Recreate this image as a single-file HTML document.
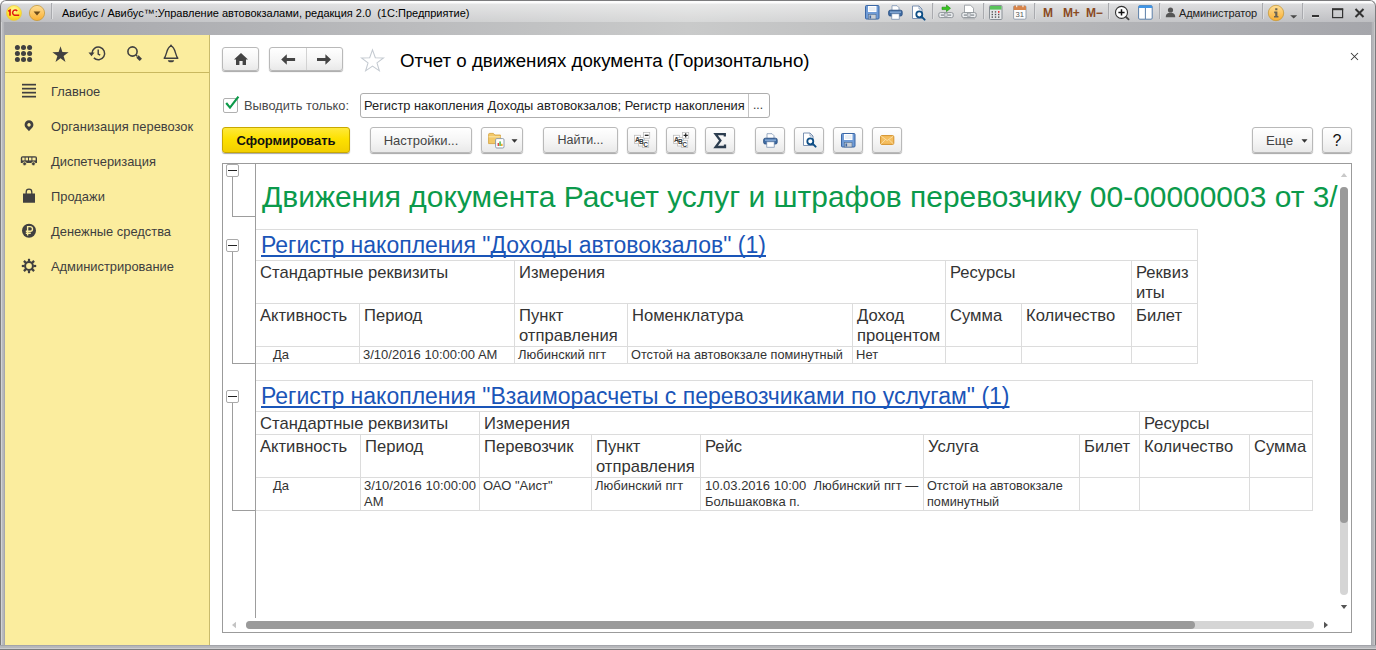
<!DOCTYPE html>
<html><head><meta charset="utf-8">
<style>
*{box-sizing:border-box;margin:0;padding:0}
html,body{width:1376px;height:650px;overflow:hidden;background:#fff;font-family:"Liberation Sans",sans-serif;}
.abs{position:absolute}
#win{position:absolute;left:0;top:0;width:1376px;height:650px;background:#a8a9ae;overflow:hidden;border-radius:6px 6px 0 0}
#fl{position:absolute;left:0;top:22px;width:5px;height:628px;background:linear-gradient(90deg,#7c7c7e 0,#7c7c7e 1px,#d2d2d4 1px,#d2d2d4 2px,#bcbdc0 2px,#b3b4b8 4px,#a6a7ad 4px)}
#fr{position:absolute;left:1371px;top:22px;width:5px;height:628px;background:linear-gradient(90deg,#a8a9ae 0,#a8a9ae 1px,#b3b4b8 1px,#b6b7ba 3px,#c8c8ca 3px,#c8c8ca 4px,#7a7a7c 4px)}
#fb{position:absolute;left:0;top:645px;width:1376px;height:5px;background:linear-gradient(#a3a4aa 0,#a3a4aa 1px,#b5b6ba 1px,#b8b9bc 3px,#cdcdcf 3px,#cdcdcf 4px,#7c7c7e 4px)}
#ft{position:absolute;left:0;top:0;width:1376px;height:35px;border:1px solid #7c7c7e;border-bottom:0;border-radius:6px 6px 0 0;pointer-events:none}
#tb1{position:absolute;left:0;top:0;width:1376px;height:22px;background:linear-gradient(180deg,rgba(255,255,255,.97) 0,rgba(255,255,255,.97) 3px,rgba(255,255,255,.58) 4px,rgba(255,255,255,.27) 22px),linear-gradient(90deg,#a5a6ab 0,#c9caca 50%,#a5a6ab 100%)}
#tb2{position:absolute;left:0;top:22px;width:1376px;height:13px;background:linear-gradient(90deg,#a5a6ab 0,#c9caca 50%,#a5a6ab 100%)}
#title{position:absolute;left:62px;top:7px;font-size:11px;color:#000;white-space:pre}
#side{position:absolute;left:5px;top:35px;width:205px;height:610px;background:#fbed9e;border-right:1px solid #c9bb6c}
#sidetop{position:absolute;left:0;top:0;width:204px;height:38px;border-bottom:1px solid #c9b85f}
.mi{position:absolute;left:46px;font-size:12.9px;color:#3e3e3e;white-space:nowrap}
#main{position:absolute;left:210px;top:35px;width:1161px;height:610px;background:#fff}
.btn{position:absolute;height:24px;border:1px solid #b9b9b9;border-radius:3px;background:linear-gradient(#fff,#f4f4f4 60%,#e9e9e9);box-shadow:0 1px 1px rgba(0,0,0,.35);font-size:14px;color:#444;text-align:center;line-height:22px;white-space:nowrap}
#ptitle{position:absolute;left:400px;top:50px;font-size:18.7px;color:#000;white-space:nowrap}
#sheet{position:absolute;left:222px;top:163px;width:1130px;height:470px;border:1px solid #9b9b9b;background:#fff;overflow:hidden}
.tsep{position:absolute;top:3px;width:2px;height:16px;background:linear-gradient(90deg,#a9aaae 50%,#dedfe1 50%)}
.mm{top:6px;font-size:12px;font-weight:bold;color:#8a4a1f;white-space:nowrap;letter-spacing:-0.3px}
.b2{top:127px;height:26px;font-size:13px;line-height:25.500px}
.t{position:absolute;white-space:nowrap;color:#333}
.h{font-size:16.600px;line-height:20px}
.big{font-size:29.940px;line-height:36px;color:#0b9a4b}
.reg{font-size:23px;line-height:28px;color:#1a55b8;text-decoration:underline;text-decoration-thickness:2px;text-underline-offset:2px;text-decoration-skip-ink:none}
.cb{position:absolute;width:13px;height:13px;border:1px solid #aaa;border-radius:2px;background:#fff}
.cb i{position:absolute;left:1px;top:5px;width:9px;height:1px;background:#222}
.d{font-size:13px;line-height:16px}
.vl{position:absolute;width:1px;background:#dcdcdc}
.hl{position:absolute;height:1px;background:#dcdcdc}
</style></head><body>
<div id="win">
<div id="tb1"></div><div id="tb2"></div><div id="fl"></div><div id="fr"></div><div id="fb"></div><div id="ft"></div>
<div id="title">Авибус / Авибус™:Управление автовокзалами, редакция 2.0  (1С:Предприятие)</div>
<!--TITLEBAR ICONS-->
<svg class="abs" style="left:5px;top:4px" width="50" height="20" viewBox="0 0 50 20">
 <defs>
  <radialGradient id="g1c" cx="0.5" cy="0.3" r="0.7"><stop offset="0" stop-color="#fff9a8"/><stop offset="0.6" stop-color="#ffe534"/><stop offset="1" stop-color="#f4c91c"/></radialGradient>
  <linearGradient id="gor" x1="0" y1="0" x2="0" y2="1"><stop offset="0" stop-color="#ffdf96"/><stop offset="1" stop-color="#f9ae32"/></linearGradient>
 </defs>
 <circle cx="9" cy="9" r="7.6" fill="url(#g1c)" stroke="#e8c84a" stroke-width="0.6"/>
 <path d="M3.3 7.3 L5 6.2 V11.8" fill="none" stroke="#e01b12" stroke-width="1.7"/><path d="M12.2 7 A2.6 2.6 0 1 0 9.6 11.2 H14.2" fill="none" stroke="#e01b12" stroke-width="1.5"/><path d="M9.6 9.2 H12.4" fill="none" stroke="#e01b12" stroke-width="0"/>
 <circle cx="32" cy="9" r="7.6" fill="url(#gor)" stroke="#c79a3c" stroke-width="0.8"/>
 <path d="M28.6 7.6 L35.4 7.6 L32 11.4Z" fill="#6b4a1a"/>
</svg>
<div class="tsep" style="left:51px"></div>
<!-- save -->
<svg class="abs" style="left:865px;top:5px" width="15" height="15" viewBox="0 0 15 15"><rect x="0.5" y="0.5" width="13.5" height="13.5" rx="1" fill="#6f9bd6" stroke="#3b67a5"/><rect x="3" y="1" width="8.5" height="6" fill="#ffffff"/><path d="M4 3h6.5M4 5h6.5" stroke="#b9c9de" stroke-width="0.6"/><rect x="3.5" y="9.5" width="7.5" height="4.5" fill="#c9cfd6" stroke="#54708f" stroke-width="0.6"/><rect x="4.5" y="10.5" width="1.6" height="3" fill="#3b67a5"/></svg>
<!-- print -->
<svg class="abs" style="left:888px;top:5px" width="15" height="15" viewBox="0 0 15 15"><path d="M4 0.7h5l2 2v3h-7z" fill="#fff" stroke="#6d87aa" stroke-width="0.7"/><rect x="0.6" y="5.2" width="13.6" height="5.8" rx="1.6" fill="#3f6ca3" stroke="#2b4f82" stroke-width="0.8"/><rect x="2" y="6.5" width="11" height="1.3" fill="#8fb1db"/><rect x="3.8" y="8.8" width="7.4" height="5.4" fill="#fff" stroke="#6d87aa" stroke-width="0.7"/></svg>
<!-- preview -->
<svg class="abs" style="left:911px;top:5px" width="16" height="16" viewBox="0 0 16 16"><path d="M1.5 1h6.5l3 3v9.5h-9.5z" fill="#fff" stroke="#6d87aa" stroke-width="0.9"/><path d="M8 1v3h3" fill="none" stroke="#6d87aa" stroke-width="0.7"/><circle cx="8.3" cy="9.3" r="3" fill="#fff" stroke="#0f4f86" stroke-width="1.8"/><path d="M10.6 11.6l3 3" stroke="#0f4f86" stroke-width="2" stroke-linecap="round"/></svg>
<div class="tsep" style="left:932px"></div>
<!-- link arrow -->
<svg class="abs" style="left:938px;top:4px" width="16" height="16" viewBox="0 0 16 16"><path d="M4 3.2h4.5V1l4 3.3-4 3.3V5.6H4z" fill="#35c81e" stroke="#1f8a10" stroke-width="0.6"/><rect x="0.8" y="8.6" width="14.4" height="5" rx="1.6" fill="#eef0f2" stroke="#8f9499" stroke-width="1"/><rect x="2.8" y="10.3" width="3.6" height="1.6" fill="#9aa0a6"/><rect x="9.6" y="10.3" width="3.6" height="1.6" fill="#9aa0a6"/><rect x="6.4" y="9.6" width="3.2" height="3" fill="#cfd3d7" stroke="#8f9499" stroke-width="0.5"/></svg>
<!-- link doc -->
<svg class="abs" style="left:961px;top:4px" width="16" height="16" viewBox="0 0 16 16"><path d="M3.5 1.2h6l3 3V9h-9z" fill="#fff" stroke="#8f9499" stroke-width="0.8"/><rect x="0.8" y="8.6" width="14.4" height="5" rx="1.6" fill="#eef0f2" stroke="#8f9499" stroke-width="1"/><rect x="2.8" y="10.3" width="3.6" height="1.6" fill="#9aa0a6"/><rect x="9.6" y="10.3" width="3.6" height="1.6" fill="#9aa0a6"/><rect x="6.4" y="9.6" width="3.2" height="3" fill="#cfd3d7" stroke="#8f9499" stroke-width="0.5"/><path d="M2 14.8h12" stroke="#a7abaf" stroke-width="0.8"/></svg>
<div class="tsep" style="left:983px"></div>
<!-- calc -->
<svg class="abs" style="left:989px;top:5px" width="14" height="15" viewBox="0 0 14 15"><rect x="0.5" y="0.5" width="12.5" height="14" rx="1" fill="#e6e8ea" stroke="#8a9096"/><rect x="1" y="1" width="11.5" height="3.6" fill="#59c35a"/><g fill="#555"><rect x="2.6" y="6.2" width="1.4" height="1.4"/><rect x="5.8" y="6.2" width="1.4" height="1.4"/><rect x="2.6" y="8.8" width="1.4" height="1.4"/><rect x="5.8" y="8.8" width="1.4" height="1.4"/><rect x="9" y="8.8" width="1.4" height="1.4"/><rect x="2.6" y="11.4" width="1.4" height="1.4"/><rect x="5.8" y="11.4" width="1.4" height="1.4"/><rect x="9" y="11.4" width="1.4" height="1.4"/></g><rect x="9" y="6" width="1.5" height="1.8" fill="#e33"/></svg>
<!-- calendar -->
<svg class="abs" style="left:1013px;top:4px" width="14" height="16" viewBox="0 0 14 16"><rect x="0.6" y="1.8" width="12.4" height="13.4" rx="1.2" fill="#fdfdfd" stroke="#8d99a8" stroke-width="0.9"/><path d="M0.6 6V3a1.2 1.2 0 0 1 1.2-1.2h10a1.2 1.2 0 0 1 1.2 1.2V6z" fill="#d7844a"/><rect x="3" y="0.6" width="1.3" height="2.6" fill="#f5e1cf"/><rect x="9.3" y="0.6" width="1.3" height="2.6" fill="#f5e1cf"/><text x="6.8" y="13.4" font-family="Liberation Sans" font-size="7.6" text-anchor="middle" fill="#555">31</text></svg>
<div class="tsep" style="left:1034px"></div>
<div class="abs mm" style="left:1043px">M</div><div class="abs mm" style="left:1063px">M+</div><div class="abs mm" style="left:1086px">M−</div>
<div class="tsep" style="left:1108px"></div>
<!-- zoom -->
<svg class="abs" style="left:1113px;top:4px" width="18" height="18" viewBox="0 0 18 18"><circle cx="8.5" cy="8.4" r="6" fill="#fff" stroke="#333" stroke-width="1.1"/><path d="M5.4 8.4h6.2M8.5 5.3v6.2" stroke="#111" stroke-width="1.5"/><path d="M13 13l2.6 2.4" stroke="#444" stroke-width="1.8" stroke-linecap="round"/></svg>
<!-- window -->
<svg class="abs" style="left:1138px;top:5px" width="15" height="15" viewBox="0 0 15 15"><rect x="0.6" y="0.6" width="13.6" height="13.6" rx="1.2" fill="#fff" stroke="#5b7fa8" stroke-width="1"/><path d="M0.6 3V1.8a1.2 1.2 0 0 1 1.2-1.2h11.2a1.2 1.2 0 0 1 1.2 1.2V3z" fill="#3f95e6"/><path d="M7.4 3v11" stroke="#5b7fa8" stroke-width="1"/></svg>
<div class="tsep" style="left:1159px"></div>
<!-- user -->
<svg class="abs" style="left:1165px;top:7px" width="11" height="11" viewBox="0 0 11 11"><circle cx="5.5" cy="3" r="2.6" fill="#555"/><path d="M0.8 10.2c0-3.4 2-4.4 4.7-4.4s4.7 1 4.7 4.4z" fill="#555"/></svg>
<div class="abs" style="left:1179px;top:7px;font-size:11px;color:#222;white-space:nowrap;letter-spacing:-0.1px">Администратор</div>
<div class="tsep" style="left:1262px"></div>
<svg class="abs" style="left:1267px;top:4px" width="34" height="18" viewBox="0 0 34 18"><circle cx="9" cy="9" r="7.7" fill="url(#gor)" stroke="#c79a3c" stroke-width="0.8"/><path d="M8.2 4.2h2.2v2H8.2zM7.2 7.6h3.2v4.4h1v1.6H7v-1.6h1.2V9.2h-1z" fill="#6a6353"/><path d="M23.2 11.2h7l-3.5 3.4z" fill="#4a4a4a"/></svg>
<div class="tsep" style="left:1302px"></div>
<!-- window controls -->
<svg class="abs" style="left:1308px;top:4px" width="60" height="18" viewBox="0 0 60 18"><rect x="4" y="11" width="7" height="2.2" fill="#333"/><rect x="4" y="13.2" width="7" height="0.8" fill="#eee"/><rect x="24.6" y="5" width="10" height="8.6" fill="none" stroke="#333" stroke-width="1.2"/><rect x="24" y="4.4" width="11.2" height="1.8" fill="#333"/><path d="M47.5 5l8 8M55.5 5l-8 8" stroke="#333" stroke-width="2"/></svg>
<!--/TITLEBAR ICONS-->
<div id="side"><div id="sidetop"></div>
<div class="mi" style="top:49px">Главное</div>
<div class="mi" style="top:84px">Организация перевозок</div>
<div class="mi" style="top:119px">Диспетчеризация</div>
<div class="mi" style="top:154px">Продажи</div>
<div class="mi" style="top:189px">Денежные средства</div>
<div class="mi" style="top:224px">Администрирование</div>
</div>
<div id="main"></div>
<!--SIDE ICONS (page coords)-->
<svg class="abs" style="left:5px;top:36px" width="204" height="36" viewBox="5 36 204 36" fill="#404040">
 <g><circle cx="17.4" cy="47.5" r="2.5"/><circle cx="23.5" cy="47.5" r="2.5"/><circle cx="29.6" cy="47.5" r="2.5"/><circle cx="17.4" cy="53.5" r="2.5"/><circle cx="23.5" cy="53.5" r="2.5"/><circle cx="29.6" cy="53.5" r="2.5"/><circle cx="17.4" cy="59.5" r="2.5"/><circle cx="23.5" cy="59.5" r="2.5"/><circle cx="29.6" cy="59.5" r="2.5"/></g>
 <path d="M60.5 46.3 L62.4 52.1 L68.6 52.2 L63.6 55.9 L65.5 61.9 L60.5 58.3 L55.5 61.9 L57.4 55.9 L52.4 52.2 L58.6 52.1Z"/>
 <path d="M92 53.400 A6.300 6.300 0 1 1 93.850 57.850" fill="none" stroke="#404040" stroke-width="1.500"/>
 <path d="M88.500 52.500 L94.500 52.500 L91.500 56.300Z"/>
 <path d="M98.200 49.600 V54 L100.200 55.200" fill="none" stroke="#404040" stroke-width="1.400"/>
 <circle cx="132.5" cy="51.5" r="4.6" fill="none" stroke="#404040" stroke-width="1.6"/>
 <path d="M136 55 L137.2 56.2" stroke="#404040" stroke-width="1.5"/>
 <path d="M137.5 56.5 L140.8 59.8" stroke="#404040" stroke-width="3.2"/>
 <path d="M164.2 58.3 C167 55 166.5 47 171 46 C175.500 47 175 55 177.800 58.300 Z" fill="none" stroke="#404040" stroke-width="1.4" stroke-linejoin="round"/>
 <circle cx="171" cy="45.400" r="0.9"/>
 <path d="M167.900 60.200 h6.200 a3.100 2.100 0 0 1 -6.200 0z"/>
</svg>
<svg class="abs" style="left:5px;top:76px" width="60" height="210" viewBox="5 76 60 210" fill="#404040">
 <rect x="22" y="83.800" width="14" height="1.700"/><rect x="22" y="87.800" width="14" height="1.700"/><rect x="22" y="91.800" width="14" height="1.700"/><rect x="22" y="95.800" width="14" height="1.700"/>
 <path d="M29 120.300 a4.400 4.400 0 0 1 4.400 4.400 c0 2.800 -3 4.400 -4.400 6.600 c-1.400 -2.200 -4.400 -3.800 -4.400 -6.600 a4.400 4.400 0 0 1 4.400 -4.400z M29 123.100 a1.700 1.700 0 1 0 0.001 0z" fill-rule="evenodd"/>
 <!-- bus -->
 <path d="M22.600 156.300 h12.600 q1.800 0 1.800 1.800 v5 h-16.200 v-5 q0 -1.800 1.800 -1.800z"/>
 <g fill="#fbed9e"><rect x="22.200" y="157.600" width="2.400" height="2.800"/><rect x="25.600" y="157.600" width="2.400" height="2.800"/><rect x="29" y="157.600" width="2.400" height="2.800"/><rect x="32.400" y="157.600" width="3.200" height="2.800"/></g>
 <circle cx="24.600" cy="163.800" r="1.900" stroke="#fbed9e" stroke-width="0.8"/><circle cx="33.400" cy="163.800" r="1.900" stroke="#fbed9e" stroke-width="0.8"/>
 <!-- bag -->
 <path d="M23 193.500 h12 v9.300 h-12z"/>
 <path d="M26.200 194.500 v-2.600 a2.800 2.800 0 0 1 5.600 0 v2.600" fill="none" stroke="#404040" stroke-width="1.300"/>
 <!-- ruble -->
 <circle cx="29" cy="230.800" r="7"/>
 <path d="M27.600 235.600 v-9 h2.600 a2.300 2.300 0 0 1 0 4.600 h-4.400 M25.800 233.300 h5" fill="none" stroke="#fbed9e" stroke-width="1.400"/>
 <!-- gear -->
 <g transform="translate(29 266)">
  <circle r="3.900" fill="none" stroke="#404040" stroke-width="2"/>
  <g stroke="#404040" stroke-width="2.200"><path d="M0 -4.400V-7.200"/><path d="M0 4.400V7.200"/><path d="M-4.400 0H-7.200"/><path d="M4.400 0H7.200"/><path d="M3.100 3.100L5.100 5.100"/><path d="M-3.100 3.100L-5.100 5.100"/><path d="M3.100 -3.100L5.100 -5.100"/><path d="M-3.100 -3.100L-5.100 -5.100"/></g>
 </g>
</svg>
<!--/SIDE ICONS-->
<!--TOOLBAR-->
<div class="btn" style="left:222px;top:47px;width:37px"><svg style="position:absolute;left:10px;top:4px" width="16" height="14" viewBox="0 0 16 14"><path d="M8 1 L15 7.400 H13 V13 H9.600 V9 H6.400 V13 H3 V7.400 H1Z" fill="#444"/></svg></div>
<div class="btn" style="left:269px;top:47px;width:74px"><i style="position:absolute;left:36px;top:0;width:1px;height:22px;background:#d2d2d2"></i>
<svg style="position:absolute;left:11px;top:5px" width="16" height="14" viewBox="0 0 16 14"><path d="M0.200 6.500 L5.800 1.300 V5 H14.100 V8 H5.800 V11.700Z" fill="#444"/></svg>
<svg style="position:absolute;left:47px;top:5px" width="16" height="14" viewBox="0 0 16 14"><path d="M14 6.500 L8.400 1.300 V5 H0 V8 H8.400 V11.700Z" fill="#444"/></svg></div>
<svg class="abs" style="left:360px;top:48px" width="25" height="25" viewBox="0 0 24 24"><path d="M12 1.800 L14.700 9.300 L22.600 9.500 L16.300 14.300 L18.600 21.900 L12 17.400 L5.400 21.900 L7.700 14.300 L1.400 9.500 L9.300 9.300Z" fill="#fff" stroke="#c3c9d0" stroke-width="1"/></svg>
<svg class="abs" style="left:1350px;top:52px" width="10" height="10" viewBox="0 0 10 10"><path d="M1 1L8 8M8 1L1 8" stroke="#3a3a3a" stroke-width="1.050"/></svg>
<!-- checkbox -->
<div class="abs" style="left:223px;top:98px;width:15px;height:15px;border:1px solid #b0b0b0;border-radius:2px;background:#fff"></div>
<svg class="abs" style="left:224px;top:95px" width="16" height="16" viewBox="0 0 16 16"><path d="M2.200 8 L6 12.600 L14.400 1.600" fill="none" stroke="#0d9a4a" stroke-width="2.200"/></svg>
<div class="abs" style="left:244px;top:98px;font-size:12.800px;line-height:16px;color:#4a4a4a;white-space:nowrap">Выводить только:</div>
<div class="abs" style="left:360px;top:93px;width:410px;height:25px;border:1px solid #aeaeae;border-radius:3px;background:#fff"><i style="position:absolute;left:387px;top:0;width:1px;height:23px;background:#c4c4c4"></i>
<div style="position:absolute;left:3px;top:4px;font-size:12.850px;line-height:16px;color:#222;white-space:nowrap">Регистр накопления Доходы автовокзалов; Регистр накопления</div>
<div style="position:absolute;left:392px;top:3px;font-size:12px;line-height:16px;color:#333">...</div></div>
<div class="btn" style="left:222px;top:127px;width:128px;height:26px;border-color:#c8a800;background:linear-gradient(#ffe93a,#fde100 45%,#f2cf00);color:#111;font-weight:bold;font-size:13px;line-height:25px">Сформировать</div>
<div class="btn b2" style="left:370px;width:102px">Настройки...</div>
<div class="btn b2" style="left:481px;width:42px">
<svg style="position:absolute;left:6px;top:4px" width="18" height="17" viewBox="0 0 18 17"><path d="M0.600 2.400 a1 1 0 0 1 1 -1 h3.800 l1.400 1.600 h5.600 v8.600 h-11.800z" fill="#f3c968" stroke="#d39e36" stroke-width="0.800"/><path d="M0.600 4.800 h11.800" stroke="#fbe6ac" stroke-width="1"/><rect x="7.600" y="6.600" width="8.400" height="9.400" rx="1.200" fill="#fff" stroke="#8593a4" stroke-width="0.900"/><rect x="9.600" y="11" width="1.300" height="3" fill="#d33"/><rect x="11.400" y="9.400" width="1.300" height="4.600" fill="#3a3"/><rect x="13.200" y="11.800" width="1.300" height="2.200" fill="#e90"/></svg>
<svg style="position:absolute;left:29px;top:11px" width="7" height="4" viewBox="0 0 7 4"><path d="M0.500 0.300 h6 l-3 3.400z" fill="#333"/></svg></div>
<div class="btn b2" style="left:543px;width:75px;font-size:12.500px">Найти...</div>
<div class="btn b2" style="left:627px;width:30px"><svg style="position:absolute;left:6px;top:4px" width="17" height="16" viewBox="0 0 17 16"><g fill="#fff" stroke="#bdbdbd" stroke-width="0.800"><rect x="0.500" y="3.300" width="6" height="8"/><rect x="4.500" y="5.500" width="6" height="8.500"/><rect x="8.500" y="8.300" width="6.200" height="7.200"/><rect x="9.500" y="0.400" width="6.200" height="5.800"/></g><g font-family="Liberation Sans" font-size="6.600" font-weight="bold" fill="#3a3a3a"><text x="1" y="9.800">A</text><text x="5.100" y="12.400">B</text><text x="9.200" y="14.800">C</text></g><path d="M10.800 3.300 h3.800" stroke="#222" stroke-width="1.300"/></svg></div>
<div class="btn b2" style="left:666px;width:30px"><svg style="position:absolute;left:6px;top:4px" width="17" height="16" viewBox="0 0 17 16"><g fill="#fff" stroke="#bdbdbd" stroke-width="0.800"><rect x="0.500" y="3.300" width="6" height="8"/><rect x="4.500" y="5.500" width="6" height="8.500"/><rect x="8.500" y="8.300" width="6.200" height="7.200"/><rect x="9.500" y="0.400" width="6.200" height="5.800"/></g><g font-family="Liberation Sans" font-size="6.600" font-weight="bold" fill="#3a3a3a"><text x="1" y="9.800">A</text><text x="5.100" y="12.400">B</text><text x="9.200" y="14.800">C</text></g><path d="M10.600 3.300 h4.200 M12.700 1.200 v4.200" stroke="#222" stroke-width="1.200"/></svg></div>
<div class="btn b2" style="left:705px;width:30px"><svg style="position:absolute;left:7px;top:4px" width="14" height="17" viewBox="0 0 14 17"><path d="M11.800 4.400 V2.200 H2.600 L7.400 8.600 L2.600 15 H12 V12.600" fill="none" stroke="#2d3e50" stroke-width="2.300" stroke-linejoin="miter"/></svg></div>
<div class="btn b2" style="left:755px;width:30px"><svg style="position:absolute;left:7px;top:5px" width="15" height="15" viewBox="0 0 15 15"><path d="M4 0.700h5l2 2v3h-7z" fill="#fff" stroke="#6d87aa" stroke-width="0.700"/><rect x="0.600" y="5.200" width="13.600" height="5.800" rx="1.600" fill="#3f6ca3" stroke="#2b4f82" stroke-width="0.800"/><rect x="2" y="6.500" width="11" height="1.300" fill="#8fb1db"/><rect x="3.800" y="8.800" width="7.400" height="5.400" fill="#fff" stroke="#6d87aa" stroke-width="0.700"/></svg></div>
<div class="btn b2" style="left:794px;width:30px"><svg style="position:absolute;left:7px;top:4px" width="16" height="16" viewBox="0 0 16 16"><path d="M1.500 1h6.500l3 3v9.500h-9.500z" fill="#fff" stroke="#6d87aa" stroke-width="0.900"/><path d="M8 1v3h3" fill="none" stroke="#6d87aa" stroke-width="0.700"/><circle cx="8.300" cy="9.300" r="3" fill="#fff" stroke="#0f4f86" stroke-width="1.800"/><path d="M10.600 11.600l3 3" stroke="#0f4f86" stroke-width="2" stroke-linecap="round"/></svg></div>
<div class="btn b2" style="left:833px;width:30px"><svg style="position:absolute;left:7px;top:5px" width="15" height="15" viewBox="0 0 15 15"><rect x="0.500" y="0.500" width="13.500" height="13.500" rx="1" fill="#6f9bd6" stroke="#3b67a5"/><rect x="3" y="1" width="8.500" height="6" fill="#ffffff"/><path d="M4 3h6.500M4 5h6.500" stroke="#b9c9de" stroke-width="0.600"/><rect x="3.500" y="9.500" width="7.500" height="4.500" fill="#c9cfd6" stroke="#54708f" stroke-width="0.600"/><rect x="4.500" y="10.500" width="1.600" height="3" fill="#3b67a5"/></svg></div>
<div class="btn b2" style="left:872px;width:30px"><svg style="position:absolute;left:7px;top:7px" width="15" height="10" viewBox="0 0 15 10"><rect x="0.600" y="0.600" width="13.200" height="8.800" rx="1.200" fill="#f4bd5e" stroke="#d4922c" stroke-width="1"/><path d="M1.200 1.200 L7.200 5.600 L13.200 1.200 M1.200 8.800 L5.400 4.600 M13.200 8.800 L9 4.600" fill="none" stroke="#fbe3b0" stroke-width="0.800"/></svg></div>
<div class="btn b2" style="left:1252px;width:61px"><span style="position:absolute;left:13px;top:0;font-size:13.300px">Еще</span><svg style="position:absolute;left:48px;top:11px" width="7" height="4" viewBox="0 0 7 4"><path d="M0.500 0.300 h6 l-3 3.400z" fill="#333"/></svg></div>
<div class="btn b2" style="left:1322px;width:30px;color:#111;font-size:16px">?</div>
<!--/TOOLBAR-->
<div id="ptitle">Отчет о движениях документа (Горизонтально)</div>
<div id="sheet">
<!--SHEET-->
<div class="vl" style="left:32px;top:0px;height:454px;background:#9d9d9d"></div>
<div class="cb" style="left:3px;top:0px"><i></i></div>
<div class="vl" style="left:9px;top:13px;height:40px;background:#9d9d9d"></div>
<div class="hl" style="left:9px;top:52px;width:23px;background:#9d9d9d"></div>
<div class="cb" style="left:3px;top:75px"><i></i></div>
<div class="vl" style="left:9px;top:88px;height:112px;background:#9d9d9d"></div>
<div class="hl" style="left:9px;top:199px;width:23px;background:#9d9d9d"></div>
<div class="cb" style="left:3px;top:226px"><i></i></div>
<div class="vl" style="left:9px;top:239px;height:108px;background:#9d9d9d"></div>
<div class="hl" style="left:9px;top:346px;width:23px;background:#9d9d9d"></div>
<div class="t big" style="left:39px;top:15px;">Движения документа Расчет услуг и штрафов перевозчику 00-00000003 от 3/</div>
<div class="hl" style="left:33px;top:65px;width:942px;background:#dcdcdc"></div>
<div class="hl" style="left:33px;top:96px;width:942px;background:#dcdcdc"></div>
<div class="hl" style="left:33px;top:139px;width:942px;background:#dcdcdc"></div>
<div class="hl" style="left:33px;top:182px;width:942px;background:#dcdcdc"></div>
<div class="hl" style="left:33px;top:199px;width:942px;background:#dcdcdc"></div>
<div class="vl" style="left:974px;top:65px;height:135px;background:#dcdcdc"></div>
<div class="vl" style="left:291px;top:96px;height:104px;background:#dcdcdc"></div>
<div class="vl" style="left:722px;top:96px;height:104px;background:#dcdcdc"></div>
<div class="vl" style="left:908px;top:96px;height:104px;background:#dcdcdc"></div>
<div class="vl" style="left:136px;top:139px;height:61px;background:#dcdcdc"></div>
<div class="vl" style="left:404px;top:139px;height:61px;background:#dcdcdc"></div>
<div class="vl" style="left:629px;top:139px;height:61px;background:#dcdcdc"></div>
<div class="vl" style="left:798px;top:139px;height:61px;background:#dcdcdc"></div>
<div class="t reg" style="left:38px;top:67px;">Регистр накопления "Доходы автовокзалов" (1)</div>
<div class="t h" style="left:37px;top:99px;">Стандартные реквизиты</div>
<div class="t h" style="left:296px;top:99px;">Измерения</div>
<div class="t h" style="left:727px;top:99px;">Ресурсы</div>
<div class="t h" style="left:913px;top:99px;">Реквиз<br>иты</div>
<div class="t h" style="left:37px;top:142px;">Активность</div>
<div class="t h" style="left:141px;top:142px;">Период</div>
<div class="t h" style="left:296px;top:142px;">Пункт<br>отправления</div>
<div class="t h" style="left:409px;top:142px;">Номенклатура</div>
<div class="t h" style="left:634px;top:142px;">Доход<br>процентом</div>
<div class="t h" style="left:727px;top:142px;">Сумма</div>
<div class="t h" style="left:803px;top:142px;">Количество</div>
<div class="t h" style="left:913px;top:142px;">Билет</div>
<div class="t d" style="left:50px;top:183px;">Да</div>
<div class="t d" style="left:140px;top:183px;">3/10/2016 10:00:00 AM</div>
<div class="t d" style="left:295px;top:183px;">Любинский пгт</div>
<div class="t d" style="left:408px;top:183px;font-size:12.730px">Отстой на автовокзале поминутный</div>
<div class="t d" style="left:633px;top:183px;">Нет</div>
<div class="hl" style="left:33px;top:216px;width:1057px;background:#dcdcdc"></div>
<div class="hl" style="left:33px;top:247px;width:1057px;background:#dcdcdc"></div>
<div class="hl" style="left:33px;top:270px;width:1057px;background:#dcdcdc"></div>
<div class="hl" style="left:33px;top:313px;width:1057px;background:#dcdcdc"></div>
<div class="hl" style="left:33px;top:346px;width:1057px;background:#dcdcdc"></div>
<div class="vl" style="left:1089px;top:216px;height:131px;background:#dcdcdc"></div>
<div class="vl" style="left:256px;top:247px;height:100px;background:#dcdcdc"></div>
<div class="vl" style="left:916px;top:247px;height:100px;background:#dcdcdc"></div>
<div class="vl" style="left:137px;top:270px;height:77px;background:#dcdcdc"></div>
<div class="vl" style="left:368px;top:270px;height:77px;background:#dcdcdc"></div>
<div class="vl" style="left:477px;top:270px;height:77px;background:#dcdcdc"></div>
<div class="vl" style="left:700px;top:270px;height:77px;background:#dcdcdc"></div>
<div class="vl" style="left:856px;top:270px;height:77px;background:#dcdcdc"></div>
<div class="vl" style="left:1026px;top:270px;height:77px;background:#dcdcdc"></div>
<div class="t reg" style="left:38px;top:218px;">Регистр накопления "Взаиморасчеты с перевозчиками по услугам" (1)</div>
<div class="t h" style="left:37px;top:250px;">Стандартные реквизиты</div>
<div class="t h" style="left:261px;top:250px;">Измерения</div>
<div class="t h" style="left:921px;top:250px;">Ресурсы</div>
<div class="t h" style="left:37px;top:273px;">Активность</div>
<div class="t h" style="left:142px;top:273px;">Период</div>
<div class="t h" style="left:261px;top:273px;">Перевозчик</div>
<div class="t h" style="left:373px;top:273px;">Пункт<br>отправления</div>
<div class="t h" style="left:482px;top:273px;">Рейс</div>
<div class="t h" style="left:705px;top:273px;">Услуга</div>
<div class="t h" style="left:861px;top:273px;">Билет</div>
<div class="t h" style="left:921px;top:273px;">Количество</div>
<div class="t h" style="left:1031px;top:273px;">Сумма</div>
<div class="t d" style="left:50px;top:314px;">Да</div>
<div class="t d" style="left:141px;top:314px;">3/10/2016 10:00:00<br>AM</div>
<div class="t d" style="left:260px;top:314px;">ОАО "Аист"</div>
<div class="t d" style="left:372px;top:314px;">Любинский пгт</div>
<div class="t d" style="left:482px;top:314px;">10.03.2016 10:00&nbsp; Любинский пгт —<br>Большаковка п.</div>
<div class="t d" style="left:704px;top:314px;font-size:12.700px">Отстой на автовокзале<br>поминутный</div>
<div class="abs" style="left:1117px;top:23px;width:8px;height:408px;border-radius:4px;background:#d5d5d5"></div>
<div class="abs" style="left:1117px;top:23px;width:8px;height:336px;border-radius:4px;background:#9a9a9a"></div>
<div class="abs" style="left:23px;top:457px;width:1068px;height:8px;border-radius:4px;background:#d5d5d5"></div>
<div class="abs" style="left:23px;top:457px;width:949px;height:8px;border-radius:4px;background:#9a9a9a"></div>
<svg class="abs" style="left:1117px;top:8px" width="8" height="6"><path d="M4 1 L7.2 5 L0.8 5Z" fill="#c9c9c9"/></svg>
<svg class="abs" style="left:1117px;top:440px" width="8" height="6"><path d="M0.8 1 L7.2 1 L4 5Z" fill="#555"/></svg>
<svg class="abs" style="left:8px;top:457px" width="6" height="8"><path d="M5 0.8 L5 7.2 L1 4Z" fill="#c4c4c4"/></svg>
<svg class="abs" style="left:1100px;top:457px" width="6" height="8"><path d="M1 0.8 L1 7.2 L5 4Z" fill="#555"/></svg>
<!--/SHEET-->
</div>
</div>
</body></html>
